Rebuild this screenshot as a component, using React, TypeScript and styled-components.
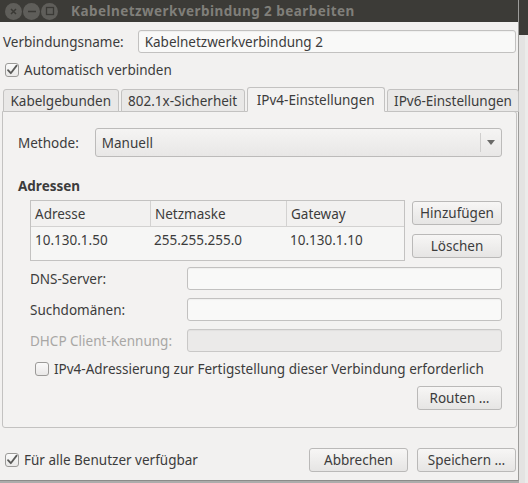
import React from 'react';
import styled, { createGlobalStyle } from 'styled-components';

const GlobalStyle = createGlobalStyle`
  html, body {
    margin: 0;
    padding: 0;
    background: #e6e6e5;
  }
  body {
    font-family: "Noto Sans", "Open Sans", sans-serif;
    font-size: 13.5px;
    color: #3c3c3c;
  }
`

const Screen = styled.div`
  display: flex;
  width: 528px;
  height: 483px;
  overflow: hidden;
`

const Window = styled.div`
  width: 518px;
  height: 480px;
  display: flex;
  flex-direction: column;
  border-right: 1px solid #9d9c9a;
  border-bottom: 1px solid #8c8b89;
  box-shadow: 0 2px 1px rgba(0, 0, 0, 0.25);
`

const Backdrop = styled.div`
  flex: 1;
  display: flex;
  flex-direction: column;
`

const BackdropTop = styled.div`
  height: 35px;
  background: #3c3b37;
`

const BackdropRest = styled.div`
  flex: 1;
  background: #ecebea;
  border-left: 6px solid #e4e3e2;
`

const TitleBar = styled.div`
  height: 22px;
  background: #3c3b37;
  display: flex;
  align-items: center;
  padding-left: 5px;
  gap: 1px;
`

const WinButton = styled.div`
  width: 17px;
  height: 17px;
  border-radius: 50%;
  background: #5f5e5a;
  display: flex;
  align-items: center;
  justify-content: center;
`

const Title = styled.div`
  margin-left: 12px;
  color: #807f7a;
  font-weight: bold;
  font-size: 13.5px;
  letter-spacing: 0.45px;
`

const Body = styled.div`
  flex: 1;
  background: #f2f1f0;
  padding: 8px 2px 0 2px;
  display: flex;
  flex-direction: column;
`

const NameRow = styled.div`
  display: flex;
  align-items: center;
  padding-left: 1px;
  gap: 14px;
`

const Label = styled.span<{ disabled?: boolean }>`
  color: ${p => p.disabled ? '#a8a7a5' : '#3c3c3c'};
  white-space: nowrap;
`

const Entry = styled.div<{ disabled?: boolean }>`
  box-sizing: border-box;
  height: 23px;
  flex: 1;
  border: 1px solid ${p => p.disabled ? '#c9c8c7' : '#c2c1c0'};
  border-radius: 3px;
  background: ${p => p.disabled ? '#ebeae9' : '#f9f9f8'};
  display: flex;
  align-items: center;
  padding: 0 6px;
  box-shadow: inset 0 1px 1px rgba(0, 0, 0, 0.04);
`

const CheckRow = styled.label<{ indent?: number }>`
  display: flex;
  align-items: center;
  gap: 5px;
  padding-left: ${p => p.indent ?? 3}px;
`

const Box = styled.div`
  box-sizing: border-box;
  width: 14px;
  height: 14px;
  border: 1px solid #9b9a98;
  border-radius: 3px;
  background: linear-gradient(#fafafa, #e9e8e7);
  display: flex;
  align-items: center;
  justify-content: center;
`

const Tabs = styled.div`
  display: flex;
  align-items: flex-end;
  gap: 2px;
  margin-top: 8px;
  padding-left: 1px;
  position: relative;
  z-index: 1;
  margin-bottom: -1px;
`

const Tab = styled.div<{ active?: boolean }>`
  box-sizing: border-box;
  height: ${p => p.active ? 25 : 23}px;
  padding: 0 ${p => p.active ? 9 : 6.5}px;
  display: flex;
  align-items: center;
  border: 1px solid #c3c2c1;
  border-bottom: ${p => p.active ? '1px solid #f3f2f1' : '1px solid #c3c2c1'};
  border-radius: 3px 3px 0 0;
  background: ${p => p.active ? '#f3f2f1' : '#e9e8e7'};
  white-space: nowrap;
`

const Panel = styled.div`
  box-sizing: border-box;
  width: 515px;
  height: 317px;
  border: 1px solid #c3c2c1;
  border-radius: 0 3px 3px 3px;
  background: #f3f2f1;
  padding: 16px 14px 0 14px;
  display: flex;
  flex-direction: column;
`

const MethodRow = styled.div`
  display: flex;
  align-items: center;
  gap: 16px;
  padding-left: 1px;
`

const Combo = styled.div`
  box-sizing: border-box;
  flex: 1;
  height: 29px;
  border: 1px solid #bcbbba;
  border-radius: 3px;
  background: linear-gradient(#f5f4f3, #e8e7e6);
  display: flex;
  align-items: center;
`

const ComboText = styled.div`
  flex: 1;
  padding-left: 6px;
`

const ComboArrow = styled.div`
  width: 20px;
  height: 19px;
  border-left: 1px solid #cfcecd;
  display: flex;
  align-items: center;
  justify-content: center;
`

const Heading = styled.div`
  font-weight: bold;
  margin-top: 20px;
  padding-left: 1px;
`

const AddressArea = styled.div`
  display: flex;
  gap: 7px;
  margin-top: 5px;
  padding-left: 13px;
`

const Table = styled.div`
  box-sizing: border-box;
  width: 376px;
  height: 61px;
  border: 1px solid #c3c2c1;
  background: #f6f6f5;
`

const TableRow = styled.div<{ header?: boolean }>`
  display: grid;
  grid-template-columns: 119px 136px 1fr;
  height: ${p => p.header ? 25 : 26}px;
  border-bottom: ${p => p.header ? '1px solid #d3d2d1' : 'none'};
  background: ${p => p.header ? '#f2f1f0' : 'transparent'};
`

const Cell = styled.div<{ header?: boolean }>`
  display: flex;
  align-items: center;
  padding-left: 4px;
  border-left: ${p => p.header ? '1px solid #d3d2d1' : 'none'};
  &:first-child {
    border-left: none;
  }
`

const ButtonColumn = styled.div`
  display: flex;
  flex-direction: column;
  gap: 9px;
  padding-top: 1px;
`

const Button = styled.div<{ width?: number }>`
  box-sizing: border-box;
  width: ${p => p.width ?? 90}px;
  height: 24px;
  border: 1px solid #bab9b8;
  border-radius: 3px;
  background: linear-gradient(#f7f6f5, #e6e5e4);
  display: flex;
  align-items: center;
  justify-content: center;
  white-space: nowrap;
`

const FieldGrid = styled.div`
  display: grid;
  grid-template-columns: 157px 1fr;
  row-gap: 8px;
  margin-top: 6px;
  padding-left: 13px;
  align-items: center;
`

const RouteRow = styled.div`
  display: flex;
  justify-content: flex-end;
  margin-top: 8px;
`

const Footer = styled.div`
  display: flex;
  align-items: center;
  margin-top: 20px;
`

const Spacer = styled.div`
  flex: 1;
`

const FooterButtons = styled.div`
  display: flex;
  gap: 9px;
`

const Check = () => (
  <Box>
    <svg width="12" height="12" viewBox="0 0 12 12">
      <path d="M2 6.2 L4.8 9.2 L10.6 1.6" fill="none" stroke="#5a5a58" strokeWidth="1.8" strokeLinecap="round" strokeLinejoin="round" />
    </svg>
  </Box>
);

export default function App() {
  return (
    <Screen>
      <GlobalStyle />
      <Window>
        <TitleBar>
          <WinButton>
            <svg width="9" height="9" viewBox="0 0 9 9">
              <path d="M2 2 L7 7 M7 2 L2 7" stroke="#3a3935" strokeWidth="1.5" />
            </svg>
          </WinButton>
          <WinButton>
            <svg width="10" height="9" viewBox="0 0 10 9">
              <path d="M1 4.5 H9" stroke="#3a3935" strokeWidth="1.5" />
            </svg>
          </WinButton>
          <WinButton>
            <svg width="10" height="10" viewBox="0 0 10 10">
              <rect x="1.5" y="1.5" width="7" height="7" fill="none" stroke="#3a3935" strokeWidth="1.3" />
            </svg>
          </WinButton>
          <Title>Kabelnetzwerkverbindung 2 bearbeiten</Title>
        </TitleBar>
        <Body>
          <NameRow>
            <Label>Verbindungsname:</Label>
            <Entry>Kabelnetzwerkverbindung 2</Entry>
          </NameRow>
          <CheckRow style={{ marginTop: 8 }}>
            <Check />
            <Label>Automatisch verbinden</Label>
          </CheckRow>
          <Tabs>
            <Tab>Kabelgebunden</Tab>
            <Tab>802.1x-Sicherheit</Tab>
            <Tab active>IPv4-Einstellungen</Tab>
            <Tab>IPv6-Einstellungen</Tab>
          </Tabs>
          <Panel>
            <MethodRow>
              <Label>Methode:</Label>
              <Combo>
                <ComboText>Manuell</ComboText>
                <ComboArrow>
                  <svg width="8" height="5" viewBox="0 0 8 5">
                    <path d="M0 0 H8 L4 5 Z" fill="#6a6a68" />
                  </svg>
                </ComboArrow>
              </Combo>
            </MethodRow>
            <Heading>Adressen</Heading>
            <AddressArea>
              <Table>
                <TableRow header>
                  <Cell header>Adresse</Cell>
                  <Cell header>Netzmaske</Cell>
                  <Cell header>Gateway</Cell>
                </TableRow>
                <TableRow>
                  <Cell>10.130.1.50</Cell>
                  <Cell>255.255.255.0</Cell>
                  <Cell>10.130.1.10</Cell>
                </TableRow>
              </Table>
              <ButtonColumn>
                <Button>Hinzufügen</Button>
                <Button>Löschen</Button>
              </ButtonColumn>
            </AddressArea>
            <FieldGrid>
              <Label>DNS-Server:</Label>
              <Entry />
              <Label>Suchdomänen:</Label>
              <Entry />
              <Label disabled>DHCP Client-Kennung:</Label>
              <Entry disabled />
            </FieldGrid>
            <CheckRow indent={18} style={{ marginTop: 8 }}>
              <Box />
              <Label>IPv4-Adressierung zur Fertigstellung dieser Verbindung erforderlich</Label>
            </CheckRow>
            <RouteRow>
              <Button width={85}>Routen …</Button>
            </RouteRow>
          </Panel>
          <Footer>
            <CheckRow>
              <Check />
              <Label>Für alle Benutzer verfügbar</Label>
            </CheckRow>
            <Spacer />
            <FooterButtons>
              <Button width={99}>Abbrechen</Button>
              <Button width={99}>Speichern …</Button>
            </FooterButtons>
          </Footer>
        </Body>
      </Window>
      <Backdrop>
        <BackdropTop />
        <BackdropRest />
      </Backdrop>
    </Screen>
  );
}
